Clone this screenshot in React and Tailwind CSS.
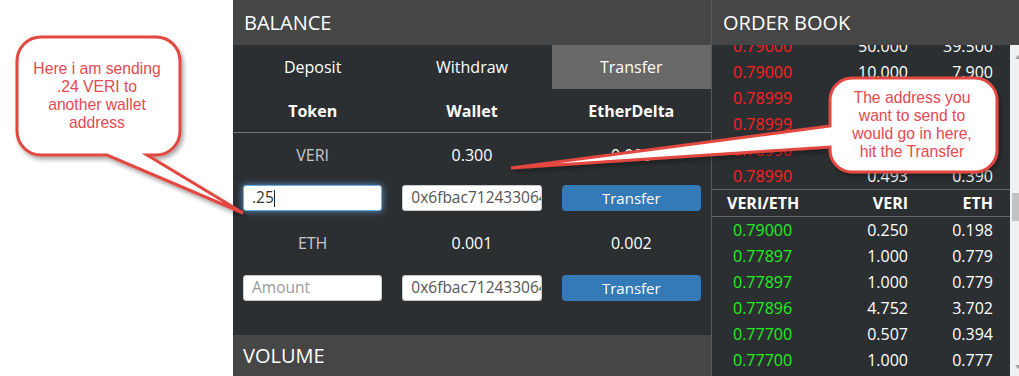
import React from "react";

const asks = [
  ["0.79000", "50.000", "39.500"],
  ["0.79000", "10.000", "7.900"],
  ["0.78999", "1.000", "0.790"],
  ["0.78999", "2.000", "1.580"],
  ["0.78990", "0.200", "0.158"],
  ["0.78990", "0.493", "0.390"],
];

const bids = [
  ["0.79000", "0.250", "0.198"],
  ["0.77897", "1.000", "0.779"],
  ["0.77897", "1.000", "0.779"],
  ["0.77896", "4.752", "3.702"],
  ["0.77700", "0.507", "0.394"],
  ["0.77700", "1.000", "0.777"],
];

const BookRow = ({ row, color }) => (
  <div className="flex h-[26px] items-center text-[16px] text-white">
    <div className={`w-[121px] pl-[21px] ${color}`}>{row[0]}</div>
    <div className="w-[75px] text-right">{row[1]}</div>
    <div className="w-[85px] text-right">{row[2]}</div>
  </div>
);

const TextBox = ({ children, focused, muted }) => (
  <div
    className={`h-[26px] flex items-center rounded-[3px] bg-white pl-[8px] pr-[2px] overflow-hidden whitespace-nowrap text-[15.5px] ${
      focused
        ? "border border-[#66afe9] shadow-[0_0_7px_rgba(102,175,233,0.8)]"
        : "border border-[#cccccc]"
    } ${muted ? "text-[#9a9a9a]" : "text-[#555]"}`}
  >
    {children}
  </div>
);

const TransferButton = () => (
  <div className="h-[26px] flex items-center justify-center rounded-[4px] bg-[#337ab7] text-[15px] text-white">
    Transfer
  </div>
);

const InputRow = ({ amount }) => (
  <div className="grid grid-cols-3 h-[26px]">
    <div className="px-[10px]">
      {amount ? (
        <TextBox focused>
          <span className="text-[#333]">{amount}</span>
          <span className="inline-block w-px h-[17px] bg-[#222]" />
        </TextBox>
      ) : (
        <TextBox muted>Amount</TextBox>
      )}
    </div>
    <div className="px-[10px]">
      <TextBox>0x6fbac71243306430b2b1f5a8c9</TextBox>
    </div>
    <div className="px-[10px]">
      <TransferButton />
    </div>
  </div>
);

const BalanceRow = ({ token, wallet, delta }) => (
  <div className="grid grid-cols-3 h-[44px] items-center text-center text-[16px]">
    <div className="text-[#c9c9c9]">{token}</div>
    <div className="text-white">{wallet}</div>
    <div className="text-white">{delta}</div>
  </div>
);

const Balance = () => (
  <div className="w-[478px] shrink-0 flex flex-col bg-[#2c2f32]">
    <div className="h-[45px] flex items-center pl-[11px] bg-[#464646] text-[20px] text-white">
      BALANCE
    </div>
    <div className="grid grid-cols-3 h-[44px] text-[16px] text-white">
      <div className="flex items-center justify-center">Deposit</div>
      <div className="flex items-center justify-center">Withdraw</div>
      <div className="flex items-center justify-center bg-[#686868]">Transfer</div>
    </div>
    <div className="grid grid-cols-3 h-[43px] items-center text-center text-[16px] font-bold text-white">
      <div>Token</div>
      <div>Wallet</div>
      <div>EtherDelta</div>
    </div>
    <div className="h-px bg-[#707070]" />
    <BalanceRow token="VERI" wallet="0.300" delta="0.000" />
    <div className="mt-[8px]">
      <InputRow amount=".25" />
    </div>
    <div className="mt-[10px]">
      <BalanceRow token="ETH" wallet="0.001" delta="0.002" />
    </div>
    <div className="mt-[10px]">
      <InputRow />
    </div>
    <div className="flex-1" />
    <div className="h-[41px] flex items-center pl-[10px] bg-[#464646] text-[20px] text-white">
      VOLUME
    </div>
  </div>
);

const OrderBook = () => (
  <div className="flex-1 flex flex-col border-l border-[#5a5a5a] bg-[#2c2f32]">
    <div className="h-[45px] shrink-0 flex items-center pl-[11px] bg-[#464646] text-[20px] text-white">
      ORDER BOOK
    </div>
    <div className="flex-1 flex overflow-hidden">
      <div className="flex-1 overflow-hidden">
        <div className="mt-[-12px]">
          {asks.map((row, i) => (
            <BookRow key={`ask-${i}`} row={row} color="text-[#ff1e1e]" />
          ))}
          <div className="flex h-[28px] items-center border-y border-[#666] text-[16px] font-bold text-white">
            <div className="w-[121px] pl-[15px]">VERI/ETH</div>
            <div className="w-[75px] text-right">VERI</div>
            <div className="w-[85px] text-right">ETH</div>
          </div>
          {bids.map((row, i) => (
            <BookRow key={`bid-${i}`} row={row} color="text-[#1ef01e]" />
          ))}
        </div>
      </div>
      {/*scrollbar*/}
      <div className="w-[9px] shrink-0 flex flex-col bg-[#f0f0f0]">
        <div className="mt-[10px] ml-[5px] w-0 h-0 border-x-[3px] border-x-transparent border-b-[4px] border-b-[#a0a0a0]" />
        <div className="mt-[134px] ml-[2px] h-[28px] bg-[#c2c2c2]" />
        <div className="flex-1" />
        <div className="mb-[7px] ml-[5px] w-0 h-0 border-x-[3px] border-x-transparent border-t-[4px] border-t-[#a0a0a0]" />
      </div>
    </div>
  </div>
);

const Callouts = () => (
  <svg
    className="absolute inset-0 pointer-events-none"
    width="1019"
    height="376"
    viewBox="0 0 1019 376"
  >
    <defs>
      <filter id="bubbleShadow" x="-10%" y="-10%" width="130%" height="140%">
        <feDropShadow dx="2" dy="3" stdDeviation="2" floodColor="#000" floodOpacity="0.35" />
      </filter>
    </defs>
    <g filter="url(#bubbleShadow)" fill="#ffffff" stroke="#e2473f" strokeWidth="3">
      <path d="M 41 37 H 156 A 24 24 0 0 1 180 61 V 131 A 24 24 0 0 1 156 155 H 147 L 243 213 L 107 155 H 41 A 24 24 0 0 1 17 131 V 61 A 24 24 0 0 1 41 37 Z" />
      <path d="M 852 78 H 975 A 22 22 0 0 1 997 100 V 150 A 22 22 0 0 1 975 172 H 852 A 22 22 0 0 1 830 150 V 147 L 511 168 L 830 126 V 100 A 22 22 0 0 1 852 78 Z" />
    </g>
    <g
      fill="#e6484f"
      fontFamily="'Liberation Sans', Arial, sans-serif"
      fontSize="15.7"
      textAnchor="middle"
    >
      <text x="97" y="74">Here i am sending</text>
      <text x="97" y="92">.24 VERI to</text>
      <text x="97" y="110">another wallet</text>
      <text x="97" y="128">address</text>
      <text x="912" y="103">The address you</text>
      <text x="912" y="121">want to send to</text>
      <text x="912" y="139">would go in here,</text>
      <text x="912" y="157">hit the Transfer</text>
    </g>
  </svg>
);

const App = () => (
  <div className="relative flex w-[1019px] h-[376px] overflow-hidden bg-white font-['Open_Sans',sans-serif]">
    <div className="w-[233px] shrink-0 bg-white" />
    <Balance />
    <OrderBook />
    <Callouts />
  </div>
);

export default App;
